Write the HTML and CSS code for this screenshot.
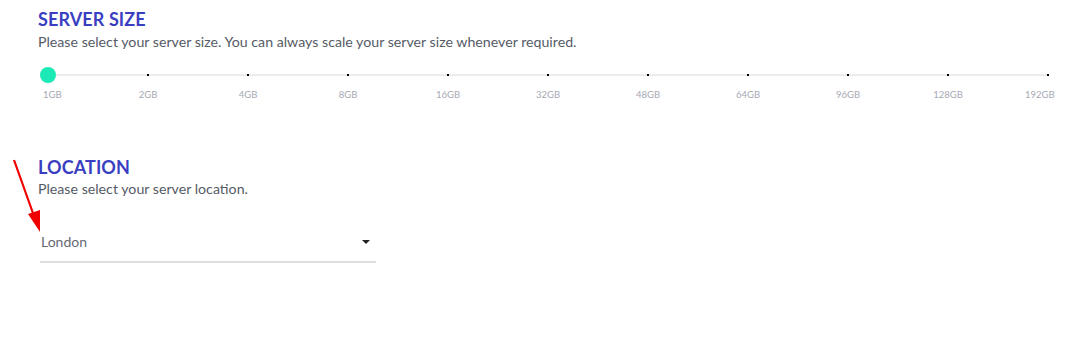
FILE: index.html
```html
<!DOCTYPE html>
<html lang="en">
<head>
    <meta charset="UTF-8">
    <meta name="viewport" content="width=device-width, initial-scale=1.0">
    <title>Server Setup</title>
    <link rel="stylesheet" href="styles.css">
</head>
<body>
    <main class="setup">
        <section class="block size-block">
            <h2>SERVER SIZE</h2>
            <p>Please select your server size. You can always scale your server size whenever required.</p>

            <div class="slider">
                <div class="track"></div>
                <span class="tick" style="left: 10%"></span>
                <span class="tick" style="left: 20%"></span>
                <span class="tick" style="left: 30%"></span>
                <span class="tick" style="left: 40%"></span>
                <span class="tick" style="left: 50%"></span>
                <span class="tick" style="left: 60%"></span>
                <span class="tick" style="left: 70%"></span>
                <span class="tick" style="left: 80%"></span>
                <span class="tick" style="left: 90%"></span>
                <span class="tick" style="left: 100%"></span>
                <span class="thumb" style="left: 0%"></span>

                <span class="mark first" style="left: 0%">1GB</span>
                <span class="mark" style="left: 10%">2GB</span>
                <span class="mark" style="left: 20%">4GB</span>
                <span class="mark" style="left: 30%">8GB</span>
                <span class="mark" style="left: 40%">16GB</span>
                <span class="mark" style="left: 50%">32GB</span>
                <span class="mark" style="left: 60%">48GB</span>
                <span class="mark" style="left: 70%">64GB</span>
                <span class="mark" style="left: 80%">96GB</span>
                <span class="mark" style="left: 90%">128GB</span>
                <span class="mark last" style="left: 100%">192GB</span>
            </div>
        </section>

        <section class="block location-block">
            <h2>LOCATION</h2>
            <p>Please select your server location.</p>

            <div class="select">
                <span class="select-value">London</span>
                <span class="caret"></span>
            </div>
        </section>

        <!-- annotation arrow -->
        <svg class="pointer" width="50" height="90" viewBox="0 0 50 90">
            <line x1="14" y1="10" x2="34" y2="66" stroke="#f00000" stroke-width="2.2"/>
            <polygon points="40,82 28,64 40,60" fill="#f00000"/>
        </svg>
    </main>
</body>
</html>
```

FILE: styles.css
```css
/* General Reset */
* { margin: 0; padding: 0; box-sizing: border-box; }
body { font-family: Lato, "Open Sans", Arial, sans-serif; color: #4a4f5a; background: #fff; }
.setup { position: relative; padding: 8px 0 0 38px; width: 1083px; height: 346px; }
.block h2 { font-size: 18px; font-weight: 700; color: #3a3fc2; line-height: 22px; letter-spacing: 0.1px; }
.block p { font-size: 14.2px; line-height: 20px; margin-top: 2px; color: #555b66; }
.location-block p { margin-top: 1px; }
.slider { position: relative; margin: 17px 0 0 10px; width: 1000px; height: 40px; }
.slider .track { position: absolute; left: -8px; right: 0; top: 5px; height: 2px; background: #ececec; }
.slider .tick { position: absolute; top: 5px; width: 2px; height: 2px; margin-left: -1px; background: #000; }
.slider .thumb { position: absolute; top: -2px; width: 16px; height: 16px; margin-left: -8px; border-radius: 50%; background: #1de9b6; }
.slider .mark { position: absolute; top: 20px; font-size: 9.5px; color: #a6a9b4; transform: translateX(-50%); white-space: nowrap; }
.slider .mark.first { transform: translateX(-5px); }
.slider .mark.last { transform: translateX(-23px); }
.location-block { margin-top: 47px; }
.select { display: flex; justify-content: space-between; align-items: center; width: 336px; margin: 34px 0 0 2px; padding: 0 6px 11px 1px; border-bottom: 2px solid #dedede; }
.select-value { font-size: 14px; color: #666a73; }
.caret { width: 0; height: 0; border-left: 4px solid transparent; border-right: 4px solid transparent; border-top: 4px solid #222; }
.pointer { position: absolute; left: 0; top: 150px; }
```
